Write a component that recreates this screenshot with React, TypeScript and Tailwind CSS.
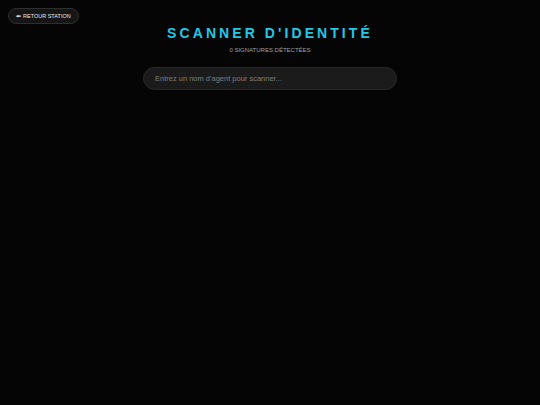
export default function App() {
  return (
    <div className="min-h-screen w-full bg-[#050505] font-['Liberation_Sans',Arial,sans-serif] text-white">
      <div className="px-2 pt-2">
        <button className="flex h-4 items-center gap-[2px] rounded-full border border-[#2e2e2e] bg-[#151515] px-[7px] text-[5.5px] text-[#e8e8e8]">
          <span>⬅</span>
          <span>RETOUR STATION</span>
        </button>
      </div>
      <div className="flex flex-col items-center">
        <h1 className="mt-[1px] text-[14px] leading-[16px] font-bold tracking-[0.22em] text-[#22c8e6]">
          SCANNER D'IDENTITÉ
        </h1>
        <p className="mt-[5px] text-[6px] leading-[8px] text-[#a0a0a0]">0 SIGNATURES DÉTECTÉES</p>
        <div className="mt-[10px] w-[254px]">
          <input
            placeholder="Entrez un nom d'agent pour scanner..."
            className="h-[23px] w-full rounded-full border border-[#2a2a2a] bg-[#1b1b1b] px-[11px] text-[7.5px] text-white outline-none placeholder:text-[#7e7e7e]"
          />
        </div>
      </div>
    </div>
  );
}
